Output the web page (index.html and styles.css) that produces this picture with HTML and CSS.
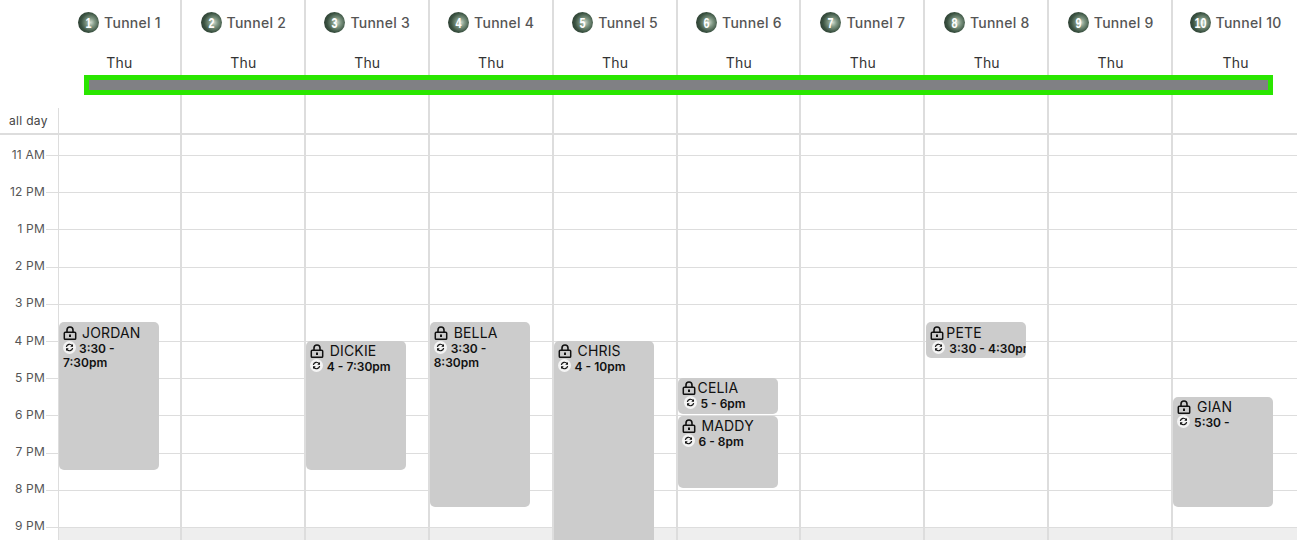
FILE: index.html
```html
<!DOCTYPE HTML>
<html>
<head>
	<title>Tunnel Schedule</title>
	<meta charset="UTF-8">
	<link rel="stylesheet" href="styles.css">
</head>
<body>
	<svg class="defs" width="0" height="0">
		<symbol id="lock" viewBox="0 0 14 14">
			<path d="M4 6.5V4a3 3 0 0 1 6 0v2.500" fill="none" stroke="#111" stroke-width="1.6"/>
			<rect x="1.300" y="6.300" width="11.400" height="7" rx="1" fill="none" stroke="#111" stroke-width="1.500"/>
			<rect x="6" y="8.500" width="2" height="2.500" fill="#111"/>
		</symbol>
		<symbol id="sync" viewBox="0 0 14 14">
			<circle cx="7" cy="7" r="7" fill="#f4f4f4"/>
			<path d="M3.600 6.300A3.500 3.500 0 0 1 9.800 4.900" fill="none" stroke="#111" stroke-width="1.300"/>
			<path d="M10.400 7.700A3.500 3.500 0 0 1 4.200 9.100" fill="none" stroke="#111" stroke-width="1.300"/>
			<path d="M10.800 3.200V6.200H7.800Z" fill="#111"/>
			<path d="M3.200 10.800V7.800H6.200Z" fill="#111"/>
		</symbol>
	</svg>

	<div class="calendar">
		<div class="head">
			<div class="corner"></div>
			<div class="head-col"><div class="tunnel"><span class="ball"><span class="num">1</span></span>Tunnel 1</div><div class="day">Thu</div></div>
			<div class="head-col"><div class="tunnel"><span class="ball"><span class="num">2</span></span>Tunnel 2</div><div class="day">Thu</div></div>
			<div class="head-col"><div class="tunnel"><span class="ball"><span class="num">3</span></span>Tunnel 3</div><div class="day">Thu</div></div>
			<div class="head-col"><div class="tunnel"><span class="ball"><span class="num">4</span></span>Tunnel 4</div><div class="day">Thu</div></div>
			<div class="head-col"><div class="tunnel"><span class="ball"><span class="num">5</span></span>Tunnel 5</div><div class="day">Thu</div></div>
			<div class="head-col"><div class="tunnel"><span class="ball"><span class="num">6</span></span>Tunnel 6</div><div class="day">Thu</div></div>
			<div class="head-col"><div class="tunnel"><span class="ball"><span class="num">7</span></span>Tunnel 7</div><div class="day">Thu</div></div>
			<div class="head-col"><div class="tunnel"><span class="ball"><span class="num">8</span></span>Tunnel 8</div><div class="day">Thu</div></div>
			<div class="head-col"><div class="tunnel"><span class="ball"><span class="num">9</span></span>Tunnel 9</div><div class="day">Thu</div></div>
			<div class="head-col last"><div class="tunnel"><span class="ball"><span class="num">10</span></span>Tunnel 10</div><div class="day">Thu</div></div>
			<div class="banner"></div>
		</div>

		<div class="allday">
			<div class="allday-label">all day</div>
			<div class="head-col"></div><div class="head-col"></div><div class="head-col"></div><div class="head-col"></div><div class="head-col"></div>
			<div class="head-col"></div><div class="head-col"></div><div class="head-col"></div><div class="head-col"></div><div class="head-col last"></div>
		</div>

		<div class="timegrid">
			<div class="slot first"><span class="hour">11 AM</span></div>
			<div class="slot"><span class="hour">12 PM</span></div>
			<div class="slot"><span class="hour">1 PM</span></div>
			<div class="slot"><span class="hour">2 PM</span></div>
			<div class="slot"><span class="hour">3 PM</span></div>
			<div class="slot"><span class="hour">4 PM</span></div>
			<div class="slot"><span class="hour">5 PM</span></div>
			<div class="slot"><span class="hour">6 PM</span></div>
			<div class="slot"><span class="hour">7 PM</span></div>
			<div class="slot"><span class="hour">8 PM</span></div>
			<div class="slot"><span class="hour">9 PM</span></div>
			<div class="closed"></div>

			<!-- event tops are measured from the top of the time grid (y=135) -->
			<div class="columns">
				<div class="col">
					<div class="event half" style="top:187px;height:148px">
						<div class="who"><svg class="lock"><use href="#lock"/></svg>JORDAN</div>
						<div class="when"><svg class="sync"><use href="#sync"/></svg>3:30 - 7:30pm</div>
					</div>
				</div>
				<div class="col"></div>
				<div class="col">
					<div class="event" style="top:206px;height:129px">
						<div class="who"><svg class="lock"><use href="#lock"/></svg>DICKIE</div>
						<div class="when"><svg class="sync"><use href="#sync"/></svg>4 - 7:30pm</div>
					</div>
				</div>
				<div class="col">
					<div class="event half" style="top:187px;height:185px">
						<div class="who"><svg class="lock"><use href="#lock"/></svg>BELLA</div>
						<div class="when"><svg class="sync"><use href="#sync"/></svg>3:30 - 8:30pm</div>
					</div>
				</div>
				<div class="col">
					<div class="event" style="top:206px;height:240px">
						<div class="who"><svg class="lock"><use href="#lock"/></svg>CHRIS</div>
						<div class="when"><svg class="sync"><use href="#sync"/></svg>4 - 10pm</div>
					</div>
				</div>
				<div class="col">
					<div class="event tight" style="top:243px;height:36px">
						<div class="who"><svg class="lock"><use href="#lock"/></svg>CELIA</div>
						<div class="when"><svg class="sync"><use href="#sync"/></svg>5 - 6pm</div>
					</div>
					<div class="event" style="top:281px;height:72px">
						<div class="who"><svg class="lock"><use href="#lock"/></svg>MADDY</div>
						<div class="when"><svg class="sync"><use href="#sync"/></svg>6 - 8pm</div>
					</div>
				</div>
				<div class="col"></div>
				<div class="col">
					<div class="event tight half" style="top:187px;height:36px;left:1px">
						<div class="who"><svg class="lock"><use href="#lock"/></svg>PETE</div>
						<div class="when nowrap"><svg class="sync"><use href="#sync"/></svg>3:30 - 4:30pm</div>
					</div>
				</div>
				<div class="col"></div>
				<div class="col last">
					<div class="event" style="top:262px;height:110px">
						<div class="who"><svg class="lock"><use href="#lock"/></svg>GIAN</div>
						<div class="when"><svg class="sync"><use href="#sync"/></svg>5:30 -</div>
					</div>
				</div>
			</div>
		</div>
	</div>
</body>
</html>
```

FILE: styles.css
```css
html, body {
	margin: 0;
	height: 540px;
	overflow: hidden;
	background: #fff;
}

body {
	font-family: Inter, "Open Sans", sans-serif;
	color: #333;
}

.defs {
	display: block;
	height: 0;
}

.calendar {
	width: 1297px;
}

.head, .allday {
	display: grid;
	grid-template-columns: 58px repeat(10, 1fr);
}

.head {
	position: relative;
	height: 108px;
}

.head-col {
	padding-left: 1px;
	border-right: 2px solid #ddd;
	min-width: 0;
}

.head-col.last {
	border-right: 0;
}

.tunnel {
	display: flex;
	align-items: center;
	justify-content: center;
	height: 20px;
	margin-top: 12px;
	font-size: 14px;
	font-weight: 500;
	letter-spacing: 0.25px;
	color: #555;
	white-space: nowrap;
}

.ball {
	flex: none;
	width: 21px;
	height: 21px;
	margin-right: 5px;
	border-radius: 50%;
	background: radial-gradient(circle at 60% 50%, #cfdccf 0, #7f9783 26%, #3a5241 58%, #2f4034 78%, #8f958f 88%, #f3eee6 100%);
	color: #fff;
	font-family: "Liberation Sans", sans-serif;
	font-size: 15px;
	font-weight: bold;
	letter-spacing: 0;
	line-height: 21px;
	text-align: center;
}

.num {
	display: block;
	transform: scaleX(0.72);
}

.day {
	margin-top: 21px;
	font-size: 14px;
	letter-spacing: 0.2px;
	line-height: 20px;
	text-align: center;
	color: #333;
}

.banner {
	position: absolute;
	left: 84px;
	top: 75px;
	width: 1189px;
	height: 20px;
	box-sizing: border-box;
	border: 5px solid #2ae600;
	background: #808084;
}

.allday {
	height: 27px;
	box-sizing: border-box;
	border-bottom: 2px solid #ddd;
}

.allday-label {
	margin-right: -1px;
	border-right: 1px solid #ddd;
	font-size: 12px;
	letter-spacing: 0.3px;
	line-height: 25px;
	padding-left: 9px;
	color: #444;
	white-space: nowrap;
}

.timegrid {
	position: relative;
	height: 405px;
	overflow: hidden;
}

.slot {
	display: flex;
	align-items: flex-end;
	height: 37.2px;
	box-sizing: border-box;
	margin-left: 46px;
	border-bottom: 1px solid #ddd;
}

.slot.first {
	height: 21px;
}

.hour {
	flex: none;
	width: 45px;
	margin-left: -46px;
	margin-bottom: -6.6px;
	font-size: 12px;
	letter-spacing: 0.2px;
	line-height: 14px;
	text-align: right;
	color: #555;
	white-space: nowrap;
}

.closed {
	height: 12px;
	margin-left: 58px;
	background: #eee;
}

.columns {
	position: absolute;
	left: 58px;
	right: 0;
	top: 0;
	bottom: 0;
	display: grid;
	grid-template-columns: repeat(10, 1fr);
}

.col {
	position: relative;
	box-sizing: border-box;
	border-right: 2px solid #ddd;
	min-width: 0;
}

.col:first-child {
	border-left: 1px solid #ddd;
}

.col.last {
	border-right: 0;
}

.event {
	position: absolute;
	left: 0;
	width: 100px;
	box-sizing: border-box;
	padding: 1px 0 0 4px;
	border-radius: 5px;
	background: #ccc;
	color: #111;
	overflow: hidden;
}

.event.half {
	padding-top: 2px;
}

.who {
	display: flex;
	align-items: center;
	font-size: 14px;
	letter-spacing: 0.15px;
	line-height: 17px;
}

.lock {
	flex: none;
	width: 14px;
	height: 14px;
	margin-right: 6px;
}

.col:first-child .lock {
	margin-right: 5px;
}

.tight .lock {
	margin-right: 2px;
}

.when {
	font-size: 12px;
	font-weight: 600;
	line-height: 14px;
	margin-top: 1px;
}

.nowrap {
	white-space: nowrap;
}

.sync {
	width: 13px;
	height: 13px;
	margin: -2px 4px -2px 0;
	vertical-align: 1px;
}

.col:first-child .sync {
	margin-right: 3px;
}

.tight .sync {
	margin-left: 2px;
	margin-right: 4px;
}
```
